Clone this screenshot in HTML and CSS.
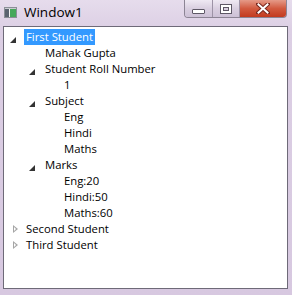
FILE: index.html
```html
<!DOCTYPE html>
<html lang="en">
<head>
  <meta charset="utf-8">
  <title>Window1</title>
  <link rel="stylesheet" href="styles.css">
</head>
<body>
  <div class="window">
    <div class="titlebar">
      <svg class="app-icon" width="13" height="11" viewBox="0 0 13 11">
        <rect x="0.5" y="0.5" width="12" height="10" fill="#f4f4f4" stroke="#8a8f96"/>
        <rect x="1" y="2" width="4" height="8" fill="#5b6470"/>
        <rect x="6" y="2" width="6" height="8" fill="#46a85a"/>
        <rect x="1" y="1" width="11" height="1" fill="#c9ccd1"/>
      </svg>
      <span class="title">Window1</span>
      <div class="caption-buttons">
        <div class="cbtn min">
          <span class="glyph-min"></span>
        </div>
        <div class="cbtn max">
          <span class="glyph-max"></span>
        </div>
        <div class="cbtn close">
          <svg width="14" height="11" viewBox="0 0 14 11">
            <path d="M2 1 L12 10 M12 1 L2 10" stroke="#7a2a20" stroke-width="4" stroke-linecap="square"/>
            <path d="M2.5 1.5 L11.5 9.5 M11.5 1.5 L2.5 9.5" stroke="#ffffff" stroke-width="2" stroke-linecap="square"/>
          </svg>
        </div>
      </div>
    </div>

    <div class="client">
      <ul class="tree">
        <li>
          <div class="row"><span class="toggle open"></span><span class="label selected">First Student</span></div>
          <ul>
            <li><div class="row"><span class="toggle"></span><span class="label">Mahak Gupta</span></div></li>
            <li>
              <div class="row"><span class="toggle open"></span><span class="label">Student Roll Number</span></div>
              <ul>
                <li><div class="row"><span class="toggle"></span><span class="label">1</span></div></li>
              </ul>
            </li>
            <li>
              <div class="row"><span class="toggle open"></span><span class="label">Subject</span></div>
              <ul>
                <li><div class="row"><span class="toggle"></span><span class="label">Eng</span></div></li>
                <li><div class="row"><span class="toggle"></span><span class="label">Hindi</span></div></li>
                <li><div class="row"><span class="toggle"></span><span class="label">Maths</span></div></li>
              </ul>
            </li>
            <li>
              <div class="row"><span class="toggle open"></span><span class="label">Marks</span></div>
              <ul>
                <li><div class="row"><span class="toggle"></span><span class="label">Eng:20</span></div></li>
                <li><div class="row"><span class="toggle"></span><span class="label">Hindi:50</span></div></li>
                <li><div class="row"><span class="toggle"></span><span class="label">Maths:60</span></div></li>
              </ul>
            </li>
          </ul>
        </li>
        <li><div class="row"><span class="toggle closed"></span><span class="label">Second Student</span></div></li>
        <li><div class="row"><span class="toggle closed"></span><span class="label">Third Student</span></div></li>
      </ul>
    </div>
  </div>
</body>
</html>
```

FILE: styles.css
```css
body {
  margin: 0;
  font-family: "Open Sans", "Noto Sans", sans-serif;
  background: #d8cbe0;
}

.window {
  width: 292px;
  height: 295px;
  display: flex;
  flex-direction: column;
  background: linear-gradient(to bottom, #e6dcec 0px, #dccfe4 30px, #d7c8e0 100%);
}

.titlebar {
  height: 26px;
  display: flex;
  align-items: flex-start;
  flex-shrink: 0;
}

.app-icon {
  margin: 7px 0 0 4px;
}

.title {
  margin: 2px 0 0 7px;
  font-size: 13.5px;
  line-height: 20px;
  color: #000;
}

.caption-buttons {
  margin-left: auto;
  margin-right: 5px;
  display: flex;
  height: 17px;
  border: 1px solid #8c8494;
  border-top: none;
  border-radius: 0 0 4px 4px;
  overflow: hidden;
}

.cbtn {
  display: flex;
  align-items: center;
  justify-content: center;
  height: 17px;
}

.min {
  width: 27px;
  background: linear-gradient(to bottom, #efe9f3, #d9cfe0 50%, #cdc1d6);
  border-right: 1px solid #9d93a6;
}

.max {
  width: 26px;
  background: linear-gradient(to bottom, #efe9f3, #d9cfe0 50%, #cdc1d6);
  border-right: 1px solid #9d93a6;
}

.close {
  width: 46px;
  background: linear-gradient(to bottom, #e59a88, #d25a3f 50%, #c23a1f);
}

.glyph-min {
  display: block;
  width: 11px;
  height: 3px;
  margin-top: 6px;
  background: #fff;
  border: 1px solid #5e5866;
  border-radius: 1px;
}

.glyph-max {
  display: block;
  width: 6px;
  height: 4px;
  border: 2px solid #fff;
  outline: 1px solid #5e5866;
  box-shadow: inset 0 0 0 1px #5e5866;
}

.client {
  margin: 0 4px 6px 3px;
  flex: 1;
  background: #fff;
  border: 1px solid #6e6a78;
}

.tree,
.tree ul {
  list-style: none;
  margin: 0;
  padding: 0;
}

.tree {
  padding-top: 2px;
}

.tree ul {
  padding-left: 19px;
}

.row {
  display: flex;
  align-items: center;
  height: 16px;
}

.toggle {
  width: 20px;
  height: 16px;
  position: relative;
  flex-shrink: 0;
}

.toggle.open::after {
  content: "";
  position: absolute;
  left: 6px;
  top: 8px;
  width: 0;
  height: 0;
  border-style: solid;
  border-width: 0 0 6px 6px;
  border-color: transparent transparent #333 transparent;
}

.toggle.closed::before {
  content: "";
  position: absolute;
  left: 9px;
  top: 4px;
  width: 0;
  height: 0;
  border-style: solid;
  border-width: 4px 0 4px 5px;
  border-color: transparent transparent transparent #a6a6a6;
}

.toggle.closed::after {
  content: "";
  position: absolute;
  left: 10px;
  top: 6px;
  width: 0;
  height: 0;
  border-style: solid;
  border-width: 2px 0 2px 2.5px;
  border-color: transparent transparent transparent #fff;
}

.label {
  font-size: 11.3px;
  line-height: 16px;
  padding: 0 2px;
  color: #000;
  white-space: nowrap;
}

.label.selected {
  background: #3399ff;
  color: #fff;
}
```
